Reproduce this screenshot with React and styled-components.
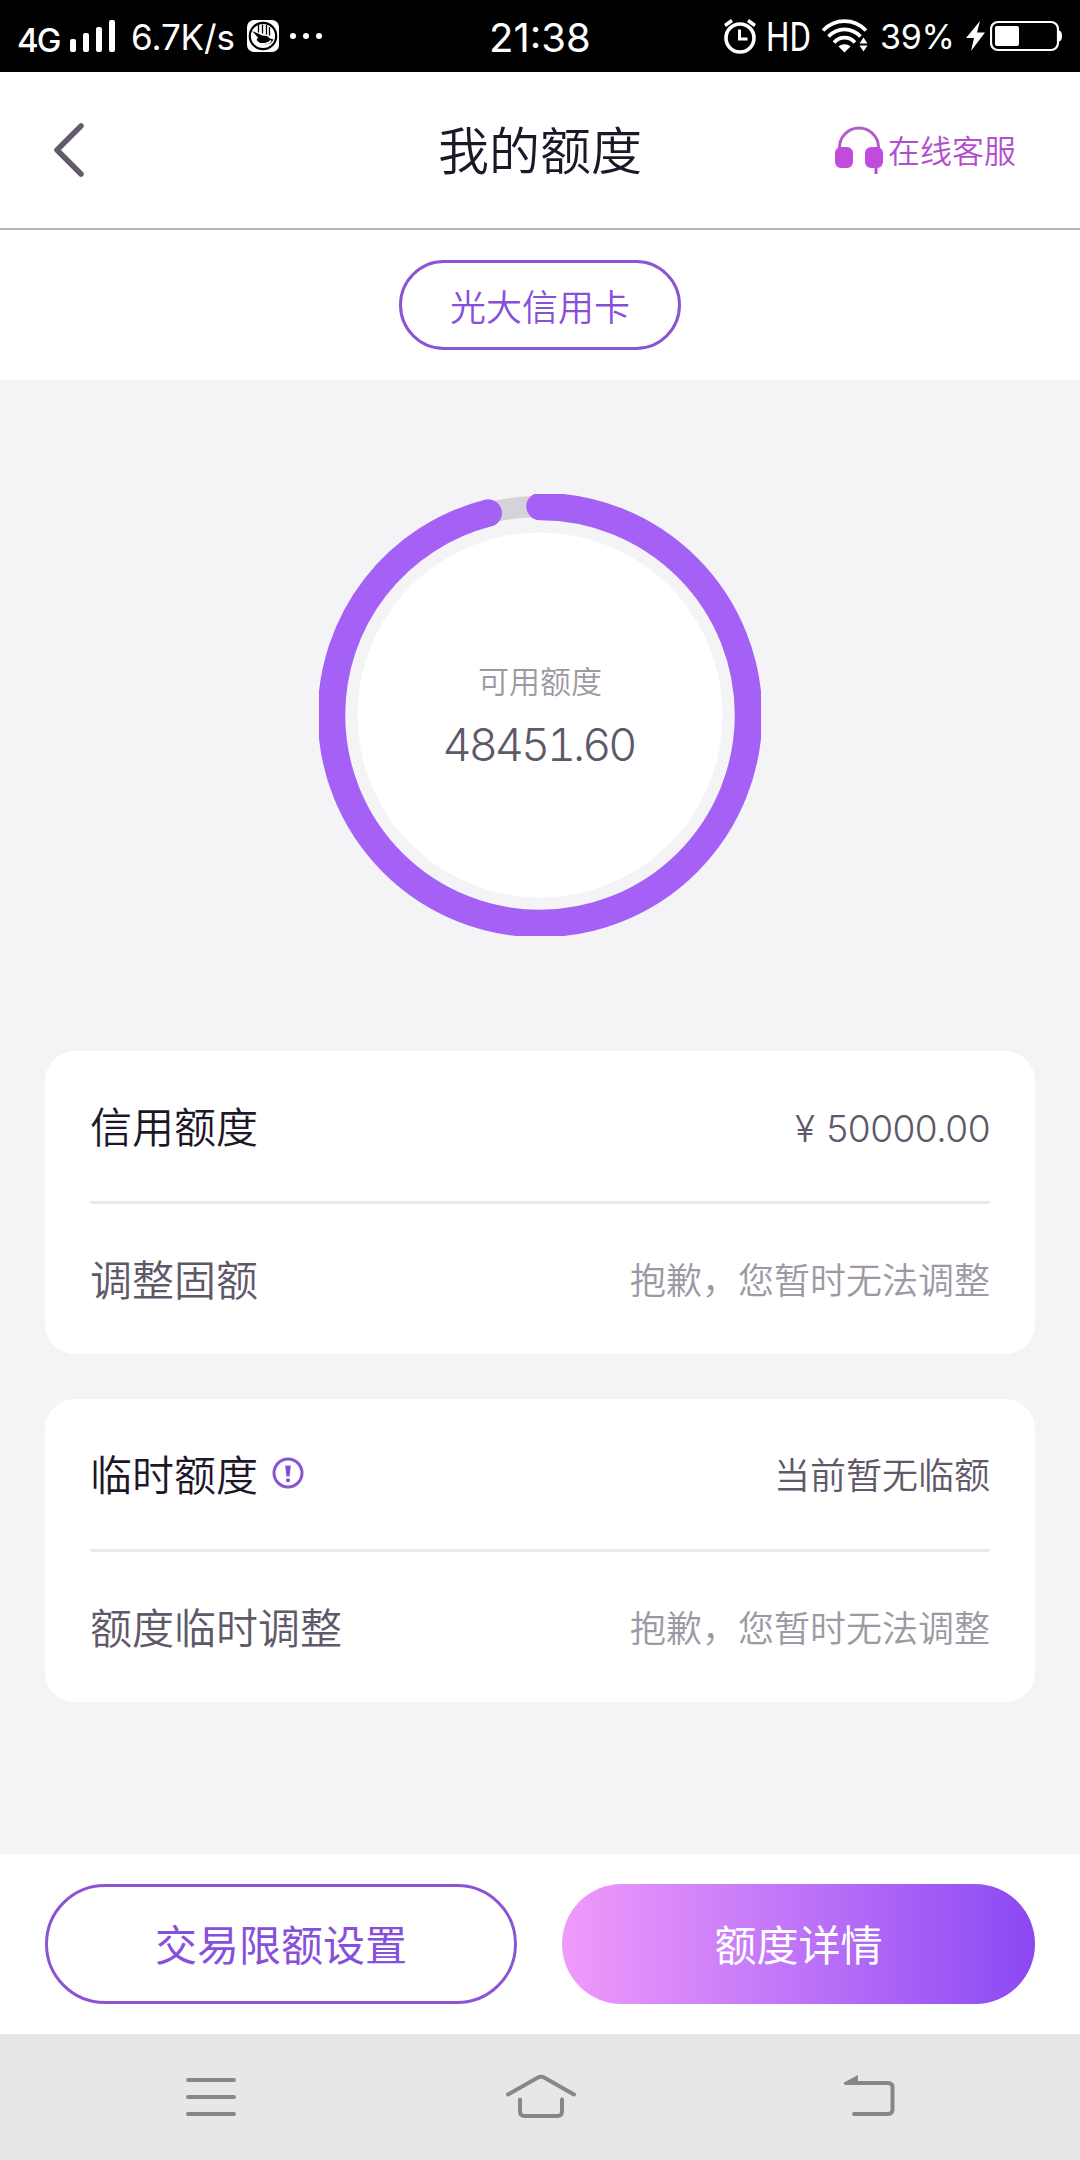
import React from 'react';
import styled, { createGlobalStyle, css } from 'styled-components';

const GlobalStyle = createGlobalStyle`
  * {
    box-sizing: border-box;
  }

  body {
    margin: 0;
    background: #f4f4f7;
    font-family: Inter, 'Noto Sans CJK SC', sans-serif;
    -webkit-font-smoothing: antialiased;
  }
`;

const Screen = styled.div`
  width: 1080px;
  height: 2160px;
  display: flex;
  flex-direction: column;
  overflow: hidden;

  svg {
    display: block;
    flex: none;
  }
`;

const StatusBar = styled.div`
  flex: none;
  display: grid;
  grid-template-columns: 489px 235px 1fr;
  height: 72px;
  background: #000;
  color: #fff;
`;

const StatusGroup = styled.div`
  display: flex;
  align-items: center;
  padding-left: ${props => props.$start || 0}px;
`;

const StatusText = styled.span`
  flex: none;
  width: ${props => props.$width}px;
  margin-left: ${props => props.$gap || 0}px;
  padding-top: ${props => props.$drop || 0}px;
  font-size: ${props => props.$size}px;
  font-weight: ${props => props.$weight || 400};
  letter-spacing: ${props => props.$track || 0}px;
  line-height: 48px;
  white-space: nowrap;
`;

const StatusIcon = styled.span`
  flex: none;
  margin-left: ${props => props.$gap || 0}px;
`;

const Header = styled.header`
  flex: none;
  display: grid;
  grid-template-columns: 1fr auto 1fr;
  align-items: center;
  height: 158px;
  padding: 0 64px 0 52px;
  background: #fff;
  border-bottom: 2px solid #b4b4b6;

  h1 {
    margin: 0 0 0 12px;
    padding-top: 3px;
    font-size: 51px;
    font-weight: 350;
    line-height: 76px;
    color: #1d1829;
  }
`;

const BackButton = styled.button`
  justify-self: start;
  padding: 0;
  border: 0;
  background: transparent;
`;

const Service = styled.a`
  justify-self: end;
  display: flex;
  align-items: center;
  gap: 5px;
  font-size: 32px;
  font-weight: 350;
  line-height: 46px;
  color: #b14fd0;

  span {
    padding-top: 3px;
  }
`;

const CardTabs = styled.div`
  flex: none;
  display: flex;
  justify-content: center;
  align-items: center;
  height: 150px;
  background: #fff;
`;

const CardTab = styled.button`
  width: 282px;
  height: 90px;
  padding: 0;
  border: 3px solid #8a55d2;
  border-radius: 45px;
  background: #fff;
  font: 350 36px 'Noto Sans CJK SC', sans-serif;
  color: #8750db;
`;

const Content = styled.main`
  flex: 1;
  padding: 114px 45px 0;
`;

const Gauge = styled.div`
  display: grid;
  place-items: center;
  width: 442px;
  height: 442px;
  margin: 0 auto 115px;

  > * {
    grid-area: 1 / 1;
  }
`;

const GaugeLabel = styled.div`
  display: flex;
  flex-direction: column;
  align-items: center;
  padding-top: 4px;

  span {
    font-size: 31px;
    font-weight: 350;
    line-height: 46px;
    color: #9c99a3;
  }

  strong {
    margin: 10px 3px 0 0;
    font-size: 45px;
    font-weight: 330;
    font-variant-numeric: tabular-nums;
    letter-spacing: -3px;
    line-height: 60px;
    color: #5f5869;
  }
`;

const Card = styled.section`
  padding: 0 45px;
  margin-bottom: 45px;
  border-radius: 30px;
  background: #fff;
`;

const Row = styled.div`
  display: flex;
  align-items: center;
  justify-content: space-between;
  height: 150px;
  padding-top: 3px;

  & + & {
    height: 153px;
    border-top: 3px solid #eaeaeb;
  }
`;

const RowTitle = styled.div`
  display: flex;
  align-items: center;
  gap: 14px;
  font-size: 42px;
  font-weight: 350;
  line-height: 60px;
  color: ${props => (props.$strong ? '#1d1829' : '#5f5869')};

  svg {
    margin-bottom: 5px;
  }
`;

const RowValue = styled.div`
  padding-top: 1px;
  font-size: 36px;
  font-weight: 350;
  line-height: 52px;
  color: ${props => (props.$muted ? '#9c99a3' : '#5f5869')};

  ${props => props.$amount && css`
    padding-top: 2px;
    font-size: 37px;
    font-weight: 330;
    letter-spacing: -0.5px;
    word-spacing: 2px;
  `}
`;

const Footer = styled.footer`
  flex: none;
  display: grid;
  grid-template-columns: 472px 473px;
  gap: 45px;
  height: 180px;
  padding: 30px 45px;
  background: #fff;
`;

const Button = styled.button`
  height: 120px;
  padding: 0 0 3px;
  border: 3px solid #8a55d2;
  border-radius: 60px;
  background: #fff;
  font: 400 42px 'Noto Sans CJK SC', sans-serif;
  color: #8750db;

  ${props => props.$primary && css`
    border: 0;
    background: linear-gradient(90deg, #f09afa 0%, #be74f8 50%, #8b48f3 100%);
    color: #fff;
  `}
`;

const NavBar = styled.nav`
  flex: none;
  display: grid;
  grid-template-columns: 422px 238px 418px;
  align-items: center;
  justify-items: center;
  height: 126px;
  background: #e7e7e7;
  color: #878787;
`;

const SignalIcon = () => (
  <svg width="46" height="34" viewBox="0 0 46 34" fill="#fff">
    <rect x="0" y="20" width="6" height="13" rx="2" />
    <rect x="13" y="14" width="6" height="19" rx="2" />
    <rect x="26" y="8" width="6" height="25" rx="2" />
    <rect x="39" y="1" width="6" height="32" rx="2" />
  </svg>
);

const HandIcon = () => (
  <svg width="32" height="32" viewBox="0 0 32 32">
    <rect width="32" height="32" rx="7" fill="#fff" />
    <circle cx="16" cy="16" r="13.2" fill="none" stroke="#000" strokeWidth="2.2" />
    <path d="M5 11l6 2.500 4 2 5 .5 3 2.500 3.500 1c-2 4-5.500 5-9.500 5-4 0-6.500-2-7.500-4.500l1.500-2.500z" fill="#000" />
    <path d="M11.500 5v7.500M15.500 4.500v9M19.500 5v9.500M22.500 7v8.500" stroke="#000" strokeWidth="1.300" />
    <path d="M7 15c0 4 3 9 8.500 9 4 0 6.500-1 8.500-3.500" stroke="#fff" strokeWidth="1.800" fill="none" />
  </svg>
);

const DotsIcon = () => (
  <svg width="34" height="8" viewBox="0 0 34 8" fill="#fff">
    <circle cx="4" cy="4" r="3" />
    <circle cx="17" cy="4" r="3" />
    <circle cx="30" cy="4" r="3" />
  </svg>
);

const AlarmIcon = () => (
  <svg width="34" height="36" viewBox="0 0 34 36" fill="none" stroke="#fff">
    <circle cx="16" cy="20" r="14" strokeWidth="3.600" />
    <path d="M15.500 11.500v9.500h8" strokeWidth="3" />
    <path d="M1 7.500l7-5M31 7.500l-7-5" strokeWidth="3.400" />
  </svg>
);

const HdIcon = () => (
  <svg width="60" height="60" viewBox="0 0 60 60" fill="#fff">
    <text
      x="1"
      y="45"
      fontFamily="Roboto"
      fontSize="40"
      fontWeight="450"
      textLength="45"
      lengthAdjust="spacingAndGlyphs"
    >
      HD
    </text>
  </svg>
);

const WifiIcon = () => (
  <svg width="46" height="34" viewBox="0 0 46 34" fill="none" stroke="#fff" strokeWidth="3.600">
    <path d="M1 11.500c12-12.500 31-12.500 43 0" />
    <path d="M6.500 17.500c9-9.500 23-9.500 32 0" />
    <path d="M12 23.500c6-6.500 15-6.500 21 0" />
    <path d="M16.500 27.500c3.500-3 8.500-3 12 0l-6 6z" fill="#fff" stroke="none" />
    <path d="M37.500 24.500l4-6 4 6zM37.500 26.500l4 6 4-6z" fill="#fff" stroke="none" />
  </svg>
);

const BoltIcon = () => (
  <svg width="20" height="30" viewBox="0 0 20 30" fill="#fff">
    <path d="M14 0L0 17h8L5 30 19 11.500h-8z" />
  </svg>
);

const BatteryIcon = () => (
  <svg width="74" height="32" viewBox="0 0 74 32">
    <rect x="1" y="2" width="67" height="28" rx="7" fill="none" stroke="#fff" strokeWidth="2.200" />
    <rect x="5" y="6" width="24" height="20" rx="2" fill="#fff" />
    <path d="M69 10.500c4 0 4 11 0 11z" fill="#fff" />
  </svg>
);

const BackIcon = () => (
  <svg width="34" height="56" viewBox="0 0 34 56" fill="none">
    <path
      d="M29 4L5 28l24 24"
      stroke="#635b6d"
      strokeWidth="5.500"
      strokeLinecap="round"
      strokeLinejoin="round"
    />
  </svg>
);

const HeadsetIcon = () => (
  <svg width="48" height="48" viewBox="0 0 48 48">
    <path d="M4.500 25v-3.500a19.500 19.500 0 0 1 39 0V25" fill="none" stroke="#b05fc4" strokeWidth="3" />
    <path d="M41 38v10" stroke="#b94bd8" strokeWidth="3" />
    <rect x="0" y="21" width="18" height="21" rx="6" fill="#c04bdc" />
    <rect x="30" y="21" width="18" height="21" rx="6" fill="#c04bdc" />
  </svg>
);

const InfoIcon = () => (
  <svg width="32" height="32" viewBox="0 0 32 32">
    <circle cx="16" cy="16" r="14" fill="none" stroke="#8a55d2" strokeWidth="3" />
    <path d="M13.200 8.500h5.600l-1.300 11h-3z" fill="#8a48e0" />
    <circle cx="16" cy="23.300" r="2" fill="#8a48e0" />
  </svg>
);

const Ring = ({ percent }) => (
  <svg width="442" height="442" viewBox="0 0 442 442" fill="none">
    <circle cx="221" cy="221" r="208.500" stroke="#d5d2d9" strokeWidth="21" />
    <circle
      cx="221"
      cy="221"
      r="208.500"
      stroke="#a561f6"
      strokeWidth="27.500"
      strokeLinecap="round"
      pathLength="100"
      strokeDasharray={`${percent} 100`}
      transform="rotate(-90 221 221)"
    />
    <circle cx="221" cy="221" r="182.500" fill="#fff" />
  </svg>
);

const MenuIcon = () => (
  <svg width="50" height="40" viewBox="0 0 50 40" fill="none" stroke="currentColor" strokeWidth="4" strokeLinecap="round">
    <path d="M2 3h46M2 20h46M2 37h46" />
  </svg>
);

const HomeIcon = () => (
  <svg width="72" height="46" viewBox="0 0 72 46" fill="none" stroke="currentColor" strokeWidth="4" strokeLinecap="round">
    <path d="M3 20.500L32.500 3.700q3.500-1.800 7 0L69 20.500" />
    <path d="M15 25.500v12q0 4.500 4.500 4.500h33q4.500 0 4.500-4.500v-12" />
  </svg>
);

const ReturnIcon = () => (
  <svg width="52" height="46" viewBox="0 0 52 46" fill="none">
    <path d="M6 9h39q4.500 0 4.500 4.500v22q0 4.500-4.500 4.500H11" stroke="currentColor" strokeWidth="4" strokeLinecap="round" />
    <path d="M1 8.500L15 1v10H2q-2-1-1-2.500z" fill="currentColor" />
  </svg>
);

const cards = [
  [
    { title: '信用额度', value: '¥ 50000.00', strong: true, amount: true },
    { title: '调整固额', value: '抱歉，您暂时无法调整', muted: true },
  ],
  [
    { title: '临时额度', value: '当前暂无临额', strong: true, info: true },
    { title: '额度临时调整', value: '抱歉，您暂时无法调整', muted: true },
  ],
];

export default () => (
  <Screen>
    <GlobalStyle />
    <StatusBar>
      <StatusGroup $start={17}>
        <StatusText $width={53} $size={33} $weight={500} $drop={8} $track={-2}>4G</StatusText>
        <SignalIcon />
        <StatusText $gap={15} $width={116} $size={35} $drop={2} $track={-0.1}>6.7K/s</StatusText>
        <HandIcon />
        <StatusIcon $gap={10}>
          <DotsIcon />
        </StatusIcon>
      </StatusGroup>
      <StatusGroup>
        <StatusText $width={110} $size={40} $drop={3}>21:38</StatusText>
      </StatusGroup>
      <StatusGroup>
        <AlarmIcon />
        <StatusIcon $gap={7}>
          <HdIcon />
        </StatusIcon>
        <StatusIcon $gap={-3}>
          <WifiIcon />
        </StatusIcon>
        <StatusText $gap={12} $width={86} $size={34} $drop={2} $track={-0.3}>39%</StatusText>
        <BoltIcon />
        <StatusIcon $gap={4}>
          <BatteryIcon />
        </StatusIcon>
      </StatusGroup>
    </StatusBar>

    <Header>
      <BackButton aria-label="返回">
        <BackIcon />
      </BackButton>
      <h1>我的额度</h1>
      <Service>
        <HeadsetIcon />
        <span>在线客服</span>
      </Service>
    </Header>

    <CardTabs>
      <CardTab>光大信用卡</CardTab>
    </CardTabs>

    <Content>
      <Gauge>
        <Ring percent={96} />
        <GaugeLabel>
          <span>可用额度</span>
          <strong>48451.60</strong>
        </GaugeLabel>
      </Gauge>

      {cards.map(rows => (
        <Card key={rows[0].title}>
          {rows.map(row => (
            <Row key={row.title}>
              <RowTitle $strong={row.strong}>
                {row.title}
                {row.info && <InfoIcon />}
              </RowTitle>
              <RowValue $amount={row.amount} $muted={row.muted}>{row.value}</RowValue>
            </Row>
          ))}
        </Card>
      ))}
    </Content>

    <Footer>
      <Button>交易限额设置</Button>
      <Button $primary>额度详情</Button>
    </Footer>

    <NavBar>
      <MenuIcon />
      <HomeIcon />
      <ReturnIcon />
    </NavBar>
  </Screen>
);
